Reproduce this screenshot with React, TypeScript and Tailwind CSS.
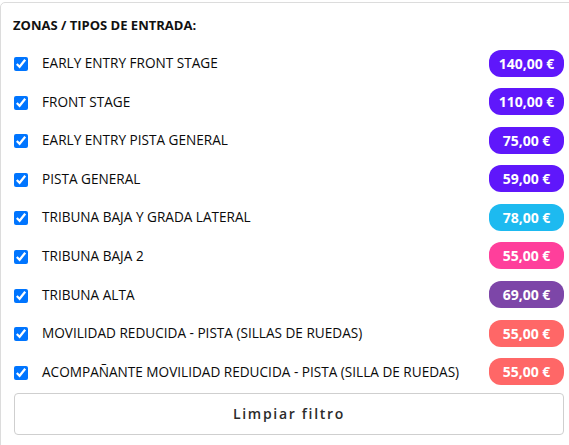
import React from "react";

const rows: { label: string; price: string; color: string }[] = [
  { label: "EARLY ENTRY FRONT STAGE", price: "140,00 €", color: "bg-[#5f17fb]" },
  { label: "FRONT STAGE", price: "110,00 €", color: "bg-[#5f17fb]" },
  { label: "EARLY ENTRY PISTA GENERAL", price: "75,00 €", color: "bg-[#5f17fb]" },
  { label: "PISTA GENERAL", price: "59,00 €", color: "bg-[#5f17fb]" },
  { label: "TRIBUNA BAJA Y GRADA LATERAL", price: "78,00 €", color: "bg-[#1dbaf0]" },
  { label: "TRIBUNA BAJA 2", price: "55,00 €", color: "bg-[#ff3f9b]" },
  { label: "TRIBUNA ALTA", price: "69,00 €", color: "bg-[#7d46a8]" },
  { label: "MOVILIDAD REDUCIDA - PISTA (SILLAS DE RUEDAS)", price: "55,00 €", color: "bg-[#ff6767]" },
  { label: "ACOMPAÑANTE MOVILIDAD REDUCIDA - PISTA (SILLA DE RUEDAS)", price: "55,00 €", color: "bg-[#ff6767]" },
];

export default function App() {
  return (
    <div className="w-[569px] h-[445px] overflow-hidden bg-white" style={{ fontFamily: '"Open Sans", "Noto Sans", sans-serif' }}>
      <div className="mt-[2px] w-[577px] h-[460px] border border-[#dcdcdc] rounded-[5px] px-[12px] pt-[12px]">
        <div className="h-[20px] leading-[20px] text-[13px] font-bold text-[#111]">ZONAS / TIPOS DE ENTRADA:</div>
        <div className="mt-[14.5px] flex flex-col gap-[11.6px] w-[551px]">
          {rows.map((r) => (
            <div key={r.label} className="h-[27px] flex items-center">
              <input type="checkbox" defaultChecked className="w-[14px] h-[14px] m-0 ml-[1px] mt-[2px] accent-[#0075ff]" />
              <span className="ml-[14px] text-[13.6px] text-[#0a0a0a] leading-[20px]">{r.label}</span>
              <span className={`ml-auto ${r.color} h-[27px] w-[75px] rounded-[12px] flex items-center justify-center text-white font-bold text-[14px]`}>
                {r.price}
              </span>
            </div>
          ))}
        </div>
        <button className="mt-[7.5px] ml-[1px] w-[550px] h-[42px] border border-[#cfcfcf] rounded-[4px] bg-white text-[14px] font-semibold tracking-[1.7px] text-[#2b2b2b]">
          Limpiar filtro
        </button>
      </div>
    </div>
  );
}
